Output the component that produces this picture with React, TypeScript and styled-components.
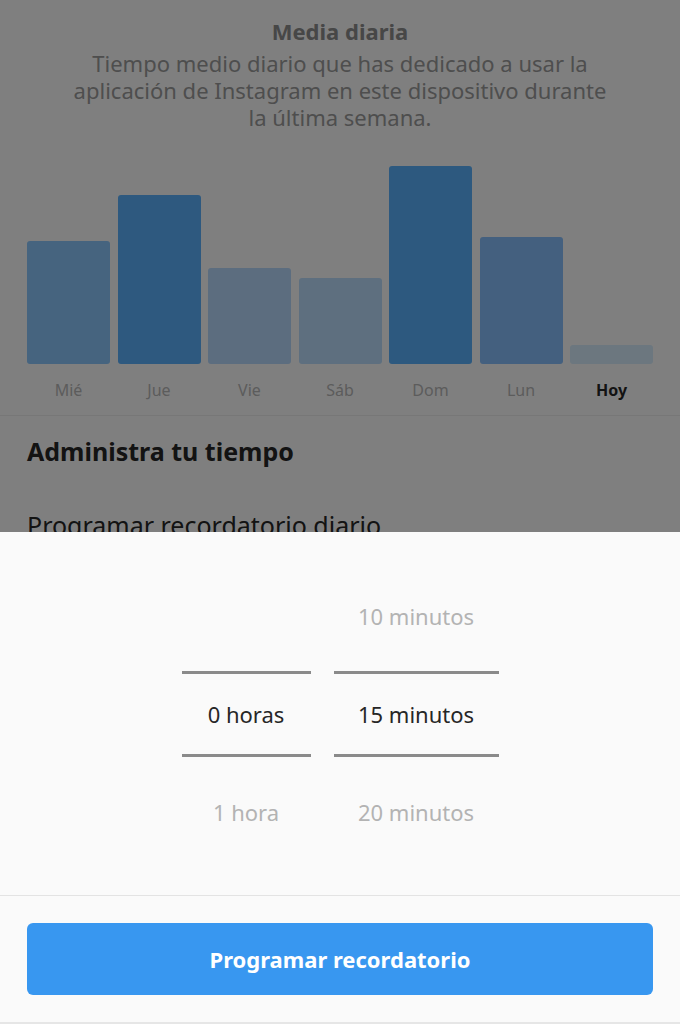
import React from 'react'
import styled, { createGlobalStyle } from 'styled-components'

const GlobalStyle = createGlobalStyle`
  html, body {
    margin: 0;
    padding: 0;
    background: #ffffff;
  }
  body {
    font-family: 'Noto Sans', 'Open Sans', sans-serif;
  }
`

type Day = {
  label: string
  height: number
  color: string
  today?: boolean
}

const days: Day[] = [
  { label: 'Mié', height: 123, color: '#8cc8ff' },
  { label: 'Jue', height: 169, color: '#5cb2ff' },
  { label: 'Vie', height: 96, color: '#b8daff' },
  { label: 'Sáb', height: 86, color: '#bcdfff' },
  { label: 'Dom', height: 198, color: '#5ab2ff' },
  { label: 'Lun', height: 127, color: '#88c0ff' },
  { label: 'Hoy', height: 19, color: '#d8eeff', today: true },
]

const Screen = styled.div`
  position: relative;
  width: 680px;
  height: 1024px;
  overflow: hidden;
  background: #ffffff;
`

const Summary = styled.section`
  padding-top: 18px;
  text-align: center;
`

const Title = styled.h2`
  margin: 0;
  font-size: 22px;
  line-height: 27px;
  font-weight: 700;
  color: #8e8e8e;
`

const Description = styled.p`
  margin: 5px auto 0;
  width: 550px;
  font-size: 22px;
  line-height: 27px;
  color: #9c9c9c;
`

const Chart = styled.div`
  display: grid;
  grid-template-columns: repeat(7, 1fr);
  column-gap: 7.5px;
  align-items: end;
  height: 200px;
  margin-top: 33px;
  padding: 0 27px;
`

const Bar = styled.div<{ $color: string }>`
  background: ${(p) => p.$color};
  border-radius: 3px;
`

const Labels = styled.div`
  display: grid;
  grid-template-columns: repeat(7, 1fr);
  column-gap: 7.5px;
  margin-top: 16px;
  padding: 0 27px 15px;
  border-bottom: 1px solid #efefef;
`

const DayLabel = styled.span<{ $today?: boolean }>`
  text-align: center;
  font-size: 16px;
  line-height: 20px;
  font-weight: ${(p) => (p.$today ? 700 : 400)};
  color: ${(p) => (p.$today ? '#262626' : '#b8b8b8')};
`

const Manage = styled.section`
  padding: 20px 27px 0;
`

const SectionHeading = styled.h3`
  margin: 0;
  font-size: 25px;
  line-height: 30px;
  font-weight: 700;
  color: #262626;
`

const Option = styled.div`
  margin-top: 44px;
  font-size: 25px;
  line-height: 30px;
  color: #262626;
`

const Scrim = styled.div`
  position: absolute;
  inset: 0;
  background: rgba(0, 0, 0, 0.5);
`

const Sheet = styled.div`
  position: absolute;
  left: 0;
  right: 0;
  bottom: 0;
  height: 492px;
  display: flex;
  flex-direction: column;
  background: #fafafa;
`

const Picker = styled.div`
  flex: 1;
  display: flex;
  justify-content: center;
  gap: 23px;
  padding-top: 29px;
`

const Column = styled.div<{ $width: number }>`
  display: flex;
  flex-direction: column;
  width: ${(p) => p.$width}px;
`

const Item = styled.div`
  height: 110px;
  display: flex;
  align-items: center;
  justify-content: center;
  font-size: 22px;
  color: #b3b3b3;
`

const Selected = styled.div`
  height: 80px;
  display: flex;
  align-items: center;
  justify-content: center;
  border-top: 3px solid #8a8a8a;
  border-bottom: 3px solid #8a8a8a;
  font-size: 22px;
  color: #262626;
`

const Footer = styled.div`
  padding: 27px 27px 27px;
  border-top: 1px solid #e3e3e3;
  border-bottom: 2px solid #e6e6e6;
`

const PrimaryButton = styled.button`
  display: block;
  width: 100%;
  height: 72px;
  border: none;
  border-radius: 6px;
  background: #3897f0;
  color: #ffffff;
  font-family: inherit;
  font-size: 22px;
  font-weight: 700;
  cursor: pointer;
`

export default function App() {
  return (
    <Screen>
      <GlobalStyle />
      <Summary>
        <Title>Media diaria</Title>
        <Description>
          Tiempo medio diario que has dedicado a usar la aplicación de Instagram en este dispositivo durante la última semana.
        </Description>
      </Summary>
      <Chart>
        {days.map((d) => (
          <Bar key={d.label} $color={d.color} style={{ height: d.height }} />
        ))}
      </Chart>
      <Labels>
        {days.map((d) => (
          <DayLabel key={d.label} $today={d.today}>
            {d.label}
          </DayLabel>
        ))}
      </Labels>
      <Manage>
        <SectionHeading>Administra tu tiempo</SectionHeading>
        <Option>Programar recordatorio diario</Option>
      </Manage>

      <Scrim />
      <Sheet>
        <Picker>
          <Column $width={129}>
            <Item />
            <Selected>0 horas</Selected>
            <Item>1 hora</Item>
          </Column>
          <Column $width={165}>
            <Item>10 minutos</Item>
            <Selected>15 minutos</Selected>
            <Item>20 minutos</Item>
          </Column>
        </Picker>
        <Footer>
          <PrimaryButton>Programar recordatorio</PrimaryButton>
        </Footer>
      </Sheet>
    </Screen>
  )
}
